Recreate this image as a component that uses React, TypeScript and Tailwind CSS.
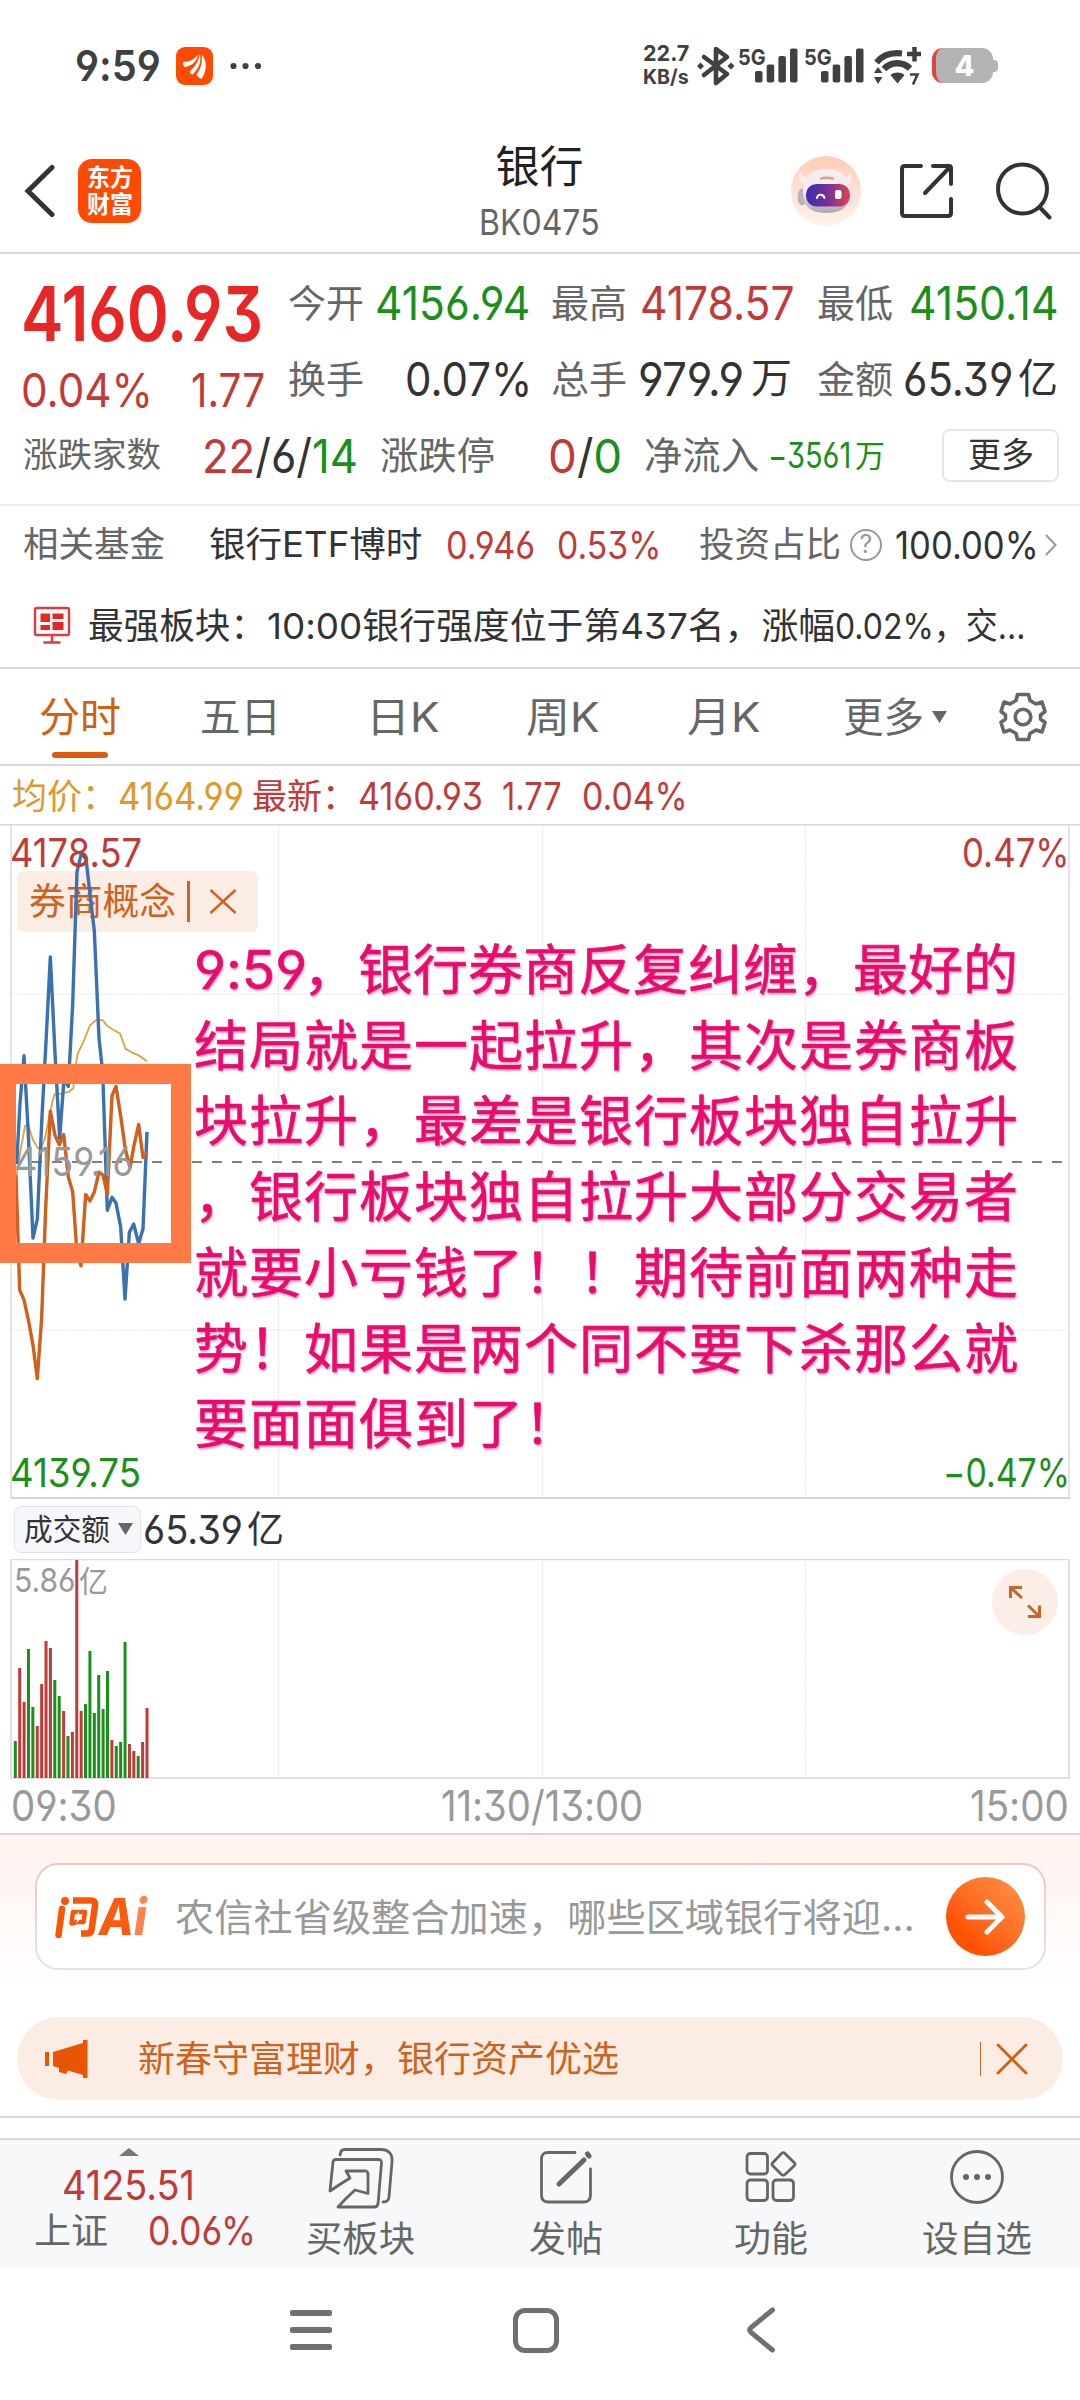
import { useLayoutEffect, useRef, useState, type ReactNode } from "react";
import clsx from "clsx";

const RED = "#c23a38";
const GREEN = "#1a8f1a";

// Stretches a single line of text to the width of its box
const Fit = ({ className, children }: { className?: string; children: ReactNode }) => {
  const box = useRef<HTMLSpanElement>(null);
  const text = useRef<HTMLSpanElement>(null);
  const [scale, setScale] = useState(1);

  useLayoutEffect(() => {
    if (box.current && text.current) {
      setScale(box.current.clientWidth / text.current.offsetWidth);
    }
  }, [children]);

  return (
    <span ref={box} className={clsx("block shrink-0 leading-none", className)}>
      <span
        ref={text}
        className="inline-block origin-left whitespace-nowrap align-top"
        style={{ transform: `scaleX(${scale})` }}
      >
        {children}
      </span>
    </span>
  );
};

const Signal = () => (
  <div className="flex">
    <Fit className="w-[28px] pt-[2px] text-[22px] font-bold">5G</Fit>
    <svg className="-ml-[11px] h-[40px] w-[43px]" viewBox="0 0 43 40" fill="#404040">
      <rect x="0" y="27" width="7.5" height="11.5" rx="2" />
      <rect x="11.7" y="20.5" width="7.5" height="18" rx="2" />
      <rect x="23.4" y="12" width="7.5" height="26.5" rx="2" />
      <rect x="35" y="4.5" width="7.5" height="34" rx="2" />
    </svg>
  </div>
);

const StatusBar = () => (
  <div className="flex h-[131px] items-center text-[#404040]">
    <Fit className="ml-[75px] w-[86px] text-[43px] font-semibold">9:59</Fit>
    <svg className="ml-[15px] h-[38px] w-[37px]" viewBox="0 0 37 38">
      <rect width="37" height="38" rx="9" fill="#ff4a03" />
      <g fill="#fff">
        <path d="M7 15C14 15 19 12 22 7.500C21 14.500 16 19 8.500 20C7.200 19 6.800 17 7 15Z" />
        <path d="M13.500 24.500C20 19.500 23 13 23.500 6.800C26 13.500 23 22 16.500 27.500C15 27 14 26 13.500 24.500Z" />
        <path d="M20.500 27.500C25.500 21 26.500 14.500 25.500 7.500C31.500 13.500 31 24 25.500 32C23.500 31 21.500 29.500 20.500 27.500Z" />
      </g>
    </svg>
    <svg className="ml-[17px] h-[8px] w-[32px]" viewBox="0 0 32 8" fill="#404040">
      <circle cx="3.500" cy="4" r="3.100" />
      <circle cx="15.500" cy="4" r="3.100" />
      <circle cx="28" cy="4" r="3.100" />
    </svg>

    <div className="ml-[381px] flex flex-col gap-[3px] pb-[2px] font-bold">
      <Fit className="w-[46px] text-[22px]">22.7</Fit>
      <Fit className="w-[46px] text-[20px]">KB/s</Fit>
    </div>
    <svg className="ml-[8px] h-[42px] w-[38px]" viewBox="0 0 38 42" fill="none" stroke="#404040" strokeWidth="4.600" strokeLinejoin="round">
      <path d="M7 12L30 29L19 38V4L30 12L7 30" strokeLinecap="round" />
      <g fill="#404040" stroke="none">
        <path d="M3.500 17.500L7 21L3.500 24.500L0 21Z M34 17.500L37.500 21L34 24.500L30.500 21Z" />
      </g>
    </svg>
    <div className="ml-[3px] flex gap-[6px] pb-[3px]">
      <Signal />
      <Signal />
    </div>
    <svg className="ml-[10px] h-[40px] w-[48px]" viewBox="0 0 48 40" fill="none" stroke="#404040">
      <path d="M2.500 16.500C9 8.500 17 6 28 7.500" strokeWidth="6" />
      <path d="M10 23C17 15.500 29 15.500 36 22.500" strokeWidth="6.500" />
      <path d="M33 8H47M40.500 1V15.500" strokeWidth="4.500" />
      <path d="M16.500 29C21 25.800 26 25.800 30.500 29L23.500 37.500Z M0 27L4 21L8.500 27Z M0 31H8.500L4 38Z" fill="#404040" stroke="none" />
      <path d="M36 28.500H43.500L39 38.500" strokeWidth="2.600" />
    </svg>
    <div className="ml-[10px] flex items-center">
      <div className="flex h-[35px] w-[61px] items-center justify-center overflow-hidden rounded-[11px] border-l-[4px] border-[#e0453c] bg-[#b3b3b3] text-[29px] leading-none font-extrabold text-white">
        4
      </div>
      <div className="h-[12px] w-[5px] rounded-r-[4px] bg-[#b3b3b3]" />
    </div>
  </div>
);

const Robot = () => (
  <svg className="h-[70px] w-[70px]" viewBox="0 0 70 70">
    <defs>
      <linearGradient id="halo" x1="0" y1="0" x2="0" y2="1">
        <stop offset="0" stopColor="#ffcdb8" />
        <stop offset="1" stopColor="#fff3ec" />
      </linearGradient>
      <linearGradient id="visor" x1="0" y1="0" x2="1" y2="0">
        <stop offset="0" stopColor="#3a2fb0" />
        <stop offset="0.450" stopColor="#6f2f9c" />
        <stop offset="1" stopColor="#e0405a" />
      </linearGradient>
      <linearGradient id="shell" x1="0" y1="0" x2="0" y2="1">
        <stop offset="0" stopColor="#f6eeee" />
        <stop offset="0.500" stopColor="#f3edf0" />
        <stop offset="1" stopColor="#aaa6b0" />
      </linearGradient>
    </defs>
    <circle cx="35" cy="35" r="35" fill="url(#halo)" />
    <ellipse cx="11" cy="41" rx="4.500" ry="8.500" fill="#b9b2b8" />
    <ellipse cx="60" cy="41" rx="4.500" ry="8.500" fill="#efe2e0" />
    <path d="M9 16C6 24 10 28 16 29L22 20C15 22 11 21 9 16Z M59 16C63 24 59 28 54 29L48 20C54 22 58 21 59 16Z" fill="#f7efef" />
    <path d="M12 40C11 22 20 13 35 13C51 13 59 22 59 40C58 52 49 57 35 57C22 57 13 52 12 40Z" fill="url(#shell)" />
    <path d="M29 21.500C33 20 39 20 43 21.500V24C39 23 33 23 29 24Z" fill="#d8a98c" />
    <rect x="15" y="28" width="44" height="22.500" rx="10.500" fill="url(#visor)" />
    <path d="M26 42C26.500 37.500 32.500 37.500 33.500 42" fill="none" stroke="#fff" strokeWidth="2" strokeLinecap="round" />
    <rect x="44" y="34" width="6.500" height="9" rx="2" fill="#fff" />
  </svg>
);

const Header = () => (
  <div className="flex h-[123px] items-center border-b-2 border-[#d8d8d8] pb-px">
    <svg className="ml-[24px] h-[54px] w-[32px]" viewBox="0 0 32 54" fill="none" stroke="#333" strokeWidth="5" strokeLinecap="round">
      <path d="M28 3.500L4 27L28 50.500" />
    </svg>
    <div className="ml-[22px] flex h-[64px] w-[63px] flex-col items-center justify-center gap-[3px] rounded-[14px] bg-[#ff4a03] font-bold text-white">
      <Fit className="w-[46px] text-[24px]">东方</Fit>
      <Fit className="w-[46px] text-[24px]">财富</Fit>
    </div>
    <div className="ml-[338px] flex w-[121px] flex-col items-center gap-[15px] pt-[6px] pb-[3px]">
      <Fit className="w-[88px] text-[44px] text-[#222]">银行</Fit>
      <Fit className="w-[121px] text-[36px] text-[#666]">BK0475</Fit>
    </div>
    <div className="ml-[191px]">
      <Robot />
    </div>
    <svg className="ml-[38px] h-[56px] w-[56px]" viewBox="0 0 56 56" fill="none" stroke="#333" strokeWidth="4" strokeLinecap="round" strokeLinejoin="round">
      <path d="M22 3H6Q3 3 3 6V50Q3 53 6 53H49Q52 53 52 50V36M34 3H50Q52 3 52 5V21M51 4L26 30" />
    </svg>
    <svg className="ml-[40px] h-[58px] w-[58px]" viewBox="0 0 58 58" fill="none" stroke="#333" strokeWidth="4" strokeLinecap="round">
      <circle cx="27.500" cy="27" r="24.500" />
      <path d="M44.500 45L54.500 55.500" />
    </svg>
  </div>
);

const Quote = () => (
  <div className="flex h-[252px] flex-col border-b-2 border-[#eee] pt-[11px]">
    <div className="flex">
      <div className="ml-[21px] flex w-[267px] flex-col">
        <Fit className="mt-[11px] w-[242px] text-[75px] font-semibold text-[#e82626]">4160.93</Fit>
        <div className="mt-[15px] flex text-[47px] text-[#c23a38]">
          <Fit className="w-[132px]">0.04%</Fit>
          <Fit className="ml-[38px] w-[74px]">1.77</Fit>
        </div>
      </div>
      <div className="flex flex-col text-[38px] text-[#666]">
        <div className="flex h-[75px] items-center">
          <Fit className="w-[76px]">今开</Fit>
          <Fit className="ml-[11px] w-[155px] text-[47px] text-[#1a8f1a]">4156.94</Fit>
          <Fit className="ml-[21px] w-[76px]">最高</Fit>
          <Fit className="ml-[13px] w-[155px] text-[47px] text-[#c23a38]">4178.57</Fit>
          <Fit className="ml-[22px] w-[76px]">最低</Fit>
          <Fit className="ml-[16px] w-[150px] text-[47px] text-[#1a8f1a]">4150.14</Fit>
        </div>
        <div className="flex h-[77px] items-center">
          <Fit className="w-[76px]">换手</Fit>
          <Fit className="ml-[41px] w-[127px] text-[47px] text-[#333]">0.07%</Fit>
          <Fit className="ml-[19px] w-[76px]">总手</Fit>
          <Fit className="ml-[11px] w-[106px] text-[47px] text-[#333]">979.9</Fit>
          <Fit className="ml-[7px] w-[41px] text-[41px] text-[#333]">万</Fit>
          <Fit className="ml-[25px] w-[76px]">金额</Fit>
          <Fit className="ml-[10px] w-[110px] text-[47px] text-[#333]">65.39</Fit>
          <Fit className="ml-[5px] w-[40px] text-[41px] text-[#333]">亿</Fit>
        </div>
      </div>
    </div>
    <div className="flex h-[76px] items-center text-[38px] text-[#666]">
      <Fit className="ml-[23px] w-[138px] text-[34px]">涨跌家数</Fit>
      <Fit className="ml-[41px] w-[156px] text-[47px] text-[#333]">
        <span className="text-[#c23a38]">22</span>/6/<span className="text-[#1a8f1a]">14</span>
      </Fit>
      <Fit className="ml-[22px] w-[115px]">涨跌停</Fit>
      <Fit className="ml-[53px] w-[74px] text-[47px] text-[#333]">
        <span className="text-[#c23a38]">0</span>/<span className="text-[#1a8f1a]">0</span>
      </Fit>
      <Fit className="ml-[22px] w-[115px]">净流入</Fit>
      <Fit className="ml-[9px] w-[83px] text-[35px] text-[#1a8f1a]">−3561</Fit>
      <Fit className="ml-[4px] w-[30px] text-[31px] text-[#1a8f1a]">万</Fit>
      <div className="ml-[57px] flex h-[53px] w-[117px] items-center justify-center rounded-[8px] border-2 border-[#e6e6e6] text-[#333]">
        <Fit className="w-[66px] text-[34px]">更多</Fit>
      </div>
    </div>
  </div>
);

const Related = () => (
  <div className="h-[163px] border-b-2 border-[#d8d8d8] text-[35px]">
    <div className="flex h-[77px] items-center text-[#666]">
      <Fit className="ml-[23px] w-[142px]">相关基金</Fit>
      <Fit className="ml-[44px] w-[213px] text-[#333]">银行ETF博时</Fit>
      <Fit className="ml-[24px] w-[89px] text-[38px] text-[#c23a38]">0.946</Fit>
      <Fit className="ml-[22px] w-[104px] text-[38px] text-[#c23a38]">0.53%</Fit>
      <Fit className="ml-[38px] w-[142px]">投资占比</Fit>
      <span className="ml-[9px] flex h-[32px] w-[32px] items-center justify-center rounded-full border-2 border-[#999] text-[25px] leading-none text-[#999]">
        ?
      </span>
      <Fit className="ml-[13px] w-[144px] text-[38px] text-[#333]">100.00%</Fit>
      <svg className="ml-[6px] h-[22px] w-[12px]" viewBox="0 0 12 22" fill="none" stroke="#999" strokeWidth="2">
        <path d="M1 1L10.500 11L1 21" />
      </svg>
    </div>
    <div className="flex h-[84px] items-center pt-px">
      <svg className="ml-[33px] h-[39px] w-[38px]" viewBox="0 0 38 39" fill="none" stroke="#e23b3b" strokeWidth="2.400">
        <rect x="2" y="2" width="34" height="27" rx="1.500" />
        <path d="M19 29V36M10.500 36.500H27.500" />
        <path d="M7.500 7.500H17V16H7.500Z M19.500 7.500H30.500V13H19.500Z M7.500 19H17V24H7.500Z M19.500 16H30.500V24H19.500Z" fill="#e82626" stroke="none" />
      </svg>
      <Fit className="ml-[17px] w-[178px] text-[36px] text-[#333]">最强板块：</Fit>
      <Fit className="ml-px w-[568px] text-[36px] text-[#333]">10:00银行强度位于第437名，涨幅</Fit>
      <Fit className="w-[190px] text-[36px] text-[#333]">0.02%，交...</Fit>
    </div>
  </div>
);

const Tabs = () => (
  <div className="flex h-[97px] items-center border-b-2 border-[#d8d8d8] text-[41px] text-[#666]">
    <div className="ml-[39px] flex flex-col items-center pt-[22px] text-[#d2600f]">
      <Fit className="w-[82px]">分时</Fit>
      <div className="mt-[14px] h-[6px] w-[56px] rounded-full bg-[#e05a0e]" />
    </div>
    <Fit className="ml-[79px] w-[81px] pt-px">五日</Fit>
    <Fit className="ml-[85px] w-[74px] pt-px">日K</Fit>
    <Fit className="ml-[86px] w-[74px] pt-px">周K</Fit>
    <Fit className="ml-[87px] w-[74px] pt-px">月K</Fit>
    <Fit className="ml-[82px] w-[81px] pt-px">更多</Fit>
    <svg className="ml-[8px] h-[12px] w-[15px]" viewBox="0 0 15 12" fill="#666">
      <path d="M0 0H15L7.500 12Z" />
    </svg>
    <svg className="ml-[52px] h-[50px] w-[48px]" viewBox="0 0 48 50" fill="none" stroke="#666" strokeWidth="3.600" strokeLinejoin="round">
      <path d="M18.500 2.500H29.500L31 8.500L37 12L43 10L46 19.500L41.500 23V27L46 30.500L43 40L37 38L31 41.500L29.500 47.500H18.500L17 41.500L11 38L5 40L2 30.500L6.500 27V23L2 19.500L5 10L11 12L17 8.500Z" />
      <circle cx="24" cy="25" r="7.800" />
    </svg>
  </div>
);

const Averages = () => (
  <div className="flex h-[58px] items-center pt-[2px] text-[35px] text-[#c23a38]">
    <Fit className="ml-[12px] w-[105px] text-[#e0982b]">均价：</Fit>
    <Fit className="ml-px w-[126px] text-[38px] text-[#e0982b]">4164.99</Fit>
    <Fit className="ml-[8px] w-[105px]">最新：</Fit>
    <Fit className="ml-px w-[125px] text-[38px]">4160.93</Fit>
    <Fit className="ml-[19px] w-[60px] text-[38px]">1.77</Fit>
    <Fit className="ml-[20px] w-[106px] text-[38px]">0.04%</Fit>
  </div>
);

const sector =
  "50,930 60,765 72,637 85,850 99,1130 112,1078 126,800 138,600 151,370 165,630 179,860 192,700 205,720 218,500 231,140 244,90 258,105 270,200 283,300 297,590 308,680 322,1055 336,1020 348,1035 362,1100 375,1295 388,1115 401,1092 416,1145 429,1105 441,843";
const broker =
  "48,960 59,1270 72,1297 86,1355 99,1420 112,1510 125,1345 137,1050 151,787 165,852 178,878 191,850 205,965 218,1005 231,1170 243,1205 257,1012 270,1030 283,1005 297,952 309,960 322,1012 336,745 348,720 362,800 376,890 390,940 402,880 416,823 429,912 441,898";
const average =
  "50,960 62,890 75,828 84,822 98,863 112,885 122,890 135,860 150,790 163,742 180,740 205,735 220,725 226,670 233,632 250,600 270,555 288,541 308,541 322,557 340,567 360,577 366,592 376,618 395,628 418,637 441,652";

const noteLines = [
  "结局就是一起拉升，其次是券商板",
  "块拉升，最差是银行板块独自拉升",
  "，银行板块独自拉升大部分交易者",
  "就要小亏钱了！！期待前面两种走",
  "势！如果是两个同不要下杀那么就",
  "要面面俱到了！",
];

const PriceChart = () => (
  <div className="relative h-[675px]">
    {/* compared sector, under the curves */}
    <div className="absolute top-[47px] left-[17px] flex h-[61px] w-[241px] items-center rounded-[7px] bg-[#fcede4]">
      <Fit className="ml-[12px] w-[147px] text-[37px] text-[#cf6220]">券商概念</Fit>
      <div className="ml-[11px] h-[41px] w-[3px] bg-[#c8652b]" />
      <svg className="ml-[19px] h-[27px] w-[28px]" viewBox="0 0 28 27" fill="none" stroke="#cf6220" strokeWidth="2.400">
        <path d="M1.500 2L26.500 25M26.500 2L1.500 25" />
      </svg>
    </div>

    <svg className="relative h-[675px] w-full" viewBox="0 824 1080 675" fill="none">
      <path d="M0 824.500H1080" stroke="#d8d8d8" strokeWidth="2" />
      <path d="M11 825V1498M1069 825V1498" stroke="#e4e4e4" strokeWidth="2" />
      <path d="M11 1498H1070" stroke="#d4d4d4" strokeWidth="2" />
      <path d="M12 994H1068M12 1330H1068M278.500 825V1498M542.500 825V1498M805.500 825V1498" stroke="#dedede" strokeDasharray="1.500 1.500" />
      <path d="M12 1162H1068" stroke="#808080" strokeWidth="1.800" strokeDasharray="10 10" />
      <g transform="translate(0 820) scale(0.33333 0.36996)" strokeLinejoin="round">
        <polyline points={average} stroke="#e0a040" strokeWidth="1.800" vectorEffect="non-scaling-stroke" />
        <polyline points={sector} stroke="#3a72b0" strokeWidth="3.400" vectorEffect="non-scaling-stroke" />
        <polyline points={broker} stroke="#d0601c" strokeWidth="3.400" vectorEffect="non-scaling-stroke" />
      </g>
    </svg>

    {/* scale labels in the corners */}
    <Fit className="absolute top-[9px] left-[10px] w-[132px] text-[40px] text-[#c23a38]">4178.57</Fit>
    <Fit className="absolute top-[9px] right-[10px] w-[108px] text-[40px] text-[#c23a38]">0.47%</Fit>
    <Fit className="absolute top-[318px] left-[14px] w-[120px] text-[40px] text-[#999]">4159.16</Fit>
    <Fit className="absolute bottom-[6px] left-[10px] w-[131px] text-[40px] text-[#1a8f1a]">4139.75</Fit>
    <Fit className="absolute right-[10px] bottom-[6px] w-[127px] text-[40px] text-[#1a8f1a]">−0.47%</Fit>

    <div className="absolute top-[240px] left-0 h-[199px] w-[191px] border-x-[20px] border-y-[20px] border-l-[16px] border-[#ff7a45]" />

    {/* note */}
    <div className="absolute top-[109px] left-[194px] text-[54px] leading-[75.7px] text-[#e80c6c] [-webkit-text-stroke:0.6px_#e80c6c] [text-shadow:1px_2px_2px_#e80c6c66]">
      <div className="flex items-center">
        <Fit className="w-[113px] text-[53px]">9:59</Fit>
        <Fit className="-ml-[4px] h-[75.700px] w-[715px] leading-[75.7px]!">，银行券商反复纠缠，最好的</Fit>
      </div>
      {noteLines.map((line) => (
        <p key={line} className="tracking-[1px] whitespace-nowrap">
          {line}
        </p>
      ))}
    </div>
  </div>
);

// [height in px, rising]
const volumes: [number, boolean][] = [
  [37, false], [110, true], [76, true], [129, false], [71, false], [52, true], [94, true], [137, true],
  [130, true], [98, false], [82, false], [67, true], [42, false], [46, true], [218, true], [67, true],
  [74, false], [127, false], [65, false], [103, false], [69, false], [107, false], [38, true], [32, false],
  [36, false], [136, false], [34, true], [27, true], [22, false], [36, true], [70, true],
];

const Volume = () => (
  <div className="border-b-2 border-[#d8d8d8]">
    <div className="flex h-[60px] items-center">
      <div className="ml-[14px] flex h-[47px] w-[127px] items-center rounded-[7px] border border-[#e2e3e6] bg-[#f6f7fa]">
        <Fit className="ml-[9px] w-[86px] text-[30px] text-[#333]">成交额</Fit>
        <svg className="ml-[8px] h-[12px] w-[15px]" viewBox="0 0 15 12" fill="#666">
          <path d="M0 0H15L7.500 12Z" />
        </svg>
      </div>
      <Fit className="ml-[2px] w-[100px] pt-px text-[40px] text-[#333]">65.39</Fit>
      <Fit className="ml-[4px] w-[37px] text-[37px] text-[#333]">亿</Fit>
    </div>
    <div className="relative h-[220px]">
      <div className="absolute top-[5px] left-[14px] flex items-center text-[#999]">
        <Fit className="w-[62px] text-[33px]">5.86</Fit>
        <Fit className="ml-[3px] w-[29px] text-[30px]">亿</Fit>
      </div>
      <svg className="relative h-[220px] w-full" viewBox="0 0 1080 220" fill="none">
        <path d="M11 0.500H1069" stroke="#dcdcdc" strokeWidth="1.500" />
        <path d="M11 0V219H1069V0" stroke="#e0e0e0" strokeWidth="2" />
        <path d="M278.500 0V219M542.500 0V219M805.500 0V219" stroke="#dedede" strokeDasharray="1.500 1.500" />
        {volumes.map(([h, up], i) => (
          <rect key={i} x={13.8 + i * 4.39} y={219 - h} width="3" height={h} fill={up ? RED : GREEN} />
        ))}
      </svg>
      <div className="absolute top-[10px] right-[22px] flex h-[66px] w-[66px] items-center justify-center rounded-full bg-[#fceee6]">
        <svg className="h-[34px] w-[34px]" viewBox="0 0 34 34" fill="none" stroke="#c8652b" strokeWidth="3">
          <path d="M2.500 13V2.500H14M3 3L14 13M31.500 20.500V31.500H20M31 31L20 20.500" />
        </svg>
      </div>
    </div>
    <div className="flex h-[54px] items-center text-[42px] text-[#999]">
      <Fit className="ml-[11px] w-[106px]">09:30</Fit>
      <Fit className="ml-[324px] w-[202px]">11:30/13:00</Fit>
      <Fit className="ml-[327px] w-[99px]">15:00</Fit>
    </div>
  </div>
);

const AskAi = () => (
  <div className="flex h-[182px] justify-center bg-linear-to-b from-[#fff2ee] to-white to-85% pt-[28px]">
    <div className="h-[107px] w-[1011px] rounded-[23px] bg-linear-to-b from-[#ecc8c0] to-[#dfe5ec] p-[2px]">
      <div className="flex h-full items-center rounded-[21px] bg-white">
        <svg className="ml-[18px] h-[42px] w-[44px]" viewBox="0 0 44 42" fill="none">
          <g stroke="#fb5608" strokeWidth="6.500">
            <path d="M7 13L3.500 39" strokeLinecap="round" />
            <path d="M18 4.500H36Q41 4.500 40 10L36.500 34Q36 37.500 32 37.500H26" />
            <path d="M18 16H30L28.500 26H22L16.500 27.500Z" strokeWidth="4.500" strokeLinejoin="round" />
          </g>
          <circle cx="10" cy="5" r="4" fill="#fb5608" />
          <path d="M24 15L19.500 22H23L21 28L27 20.500H23.500Z" fill="#fff" />
        </svg>
        <Fit className="w-[48px] text-[51px] font-extrabold text-[#fb5a10] italic">
          A<span className="text-[#ff8350]">i</span>
        </Fit>
        <Fit className="ml-[28px] w-[740px] text-[38px] text-[#999]">农信社省级整合加速，哪些区域银行将迎...</Fit>
        <div className="ml-[31px] flex h-[79px] w-[79px] items-center justify-center rounded-full bg-linear-to-bl from-[#ff9445] to-[#ff5200] to-75%">
          <svg className="h-[36px] w-[40px]" viewBox="0 0 40 36" fill="none" stroke="#fff" strokeWidth="5" strokeLinecap="round" strokeLinejoin="round">
            <path d="M3 18H37M22 3L37 18L22 33" />
          </svg>
        </div>
      </div>
    </div>
  </div>
);

const Promo = () => (
  <div className="h-[101px] border-b-2 border-[#d8d8d8]">
    <div className="mx-[17px] flex h-[83px] items-center rounded-full bg-[#fcede4]">
      <svg className="ml-[28px] h-[38px] w-[43px]" viewBox="0 0 43 38" fill="#ea5504">
        <path d="M0 12H4V26H0Z M8 12L38 3V0H42.500V38H38V35L23 30.500L21 34L14 32V28L8 26Z" />
      </svg>
      <Fit className="ml-[50px] w-[481px] text-[36px] text-[#cf6220]">新春守富理财，银行资产优选</Fit>
      <div className="ml-[361px] h-[34px] w-px bg-[#c8652b]" />
      <svg className="ml-[15px] h-[32px] w-[32px]" viewBox="0 0 32 32" fill="none" stroke="#d2600f" strokeWidth="2.800" strokeLinecap="round">
        <path d="M2 2L30 30M30 2L2 30" />
      </svg>
    </div>
  </div>
);

const BottomBar = () => (
  <div className="mt-[20px] flex h-[129px] border-t-2 border-[#d8d8d8] bg-[#f7f8fa] text-[#666]">
    <div className="ml-[34px] flex w-[220px] flex-col pt-[8px] text-[#c23a38]">
      <svg className="ml-[85px] h-[8px] w-[20px]" viewBox="0 0 20 8" fill="#777">
        <path d="M0 8H20L10 0Z" />
      </svg>
      <Fit className="mt-[9px] ml-[28px] w-[133px] text-[41px]">4125.51</Fit>
      <div className="mt-[5px] flex items-center">
        <Fit className="w-[74px] text-[36px] text-[#666]">上证</Fit>
        <Fit className="ml-[40px] w-[108px] text-[39px]">0.06%</Fit>
      </div>
    </div>

    <div className="ml-[52px] flex w-[109px] flex-col items-center pt-[7px] text-[36px]">
      <svg className="h-[62px] w-[66px]" viewBox="0 0 66 62" fill="none" stroke="#666" strokeWidth="2.800" strokeLinejoin="round" strokeLinecap="round">
        <path d="M12 8L13 4.500Q14 2.500 17 2.500H53Q65 3 64 15L61 50Q60.500 55 55 55" />
        <path d="M2 44L5 15Q5.500 12.500 8 12.500H50Q54 12.500 53.500 16L50 57Q49.500 60 46 60H10L17.500 52L27 43L40 46.500V27Q40 23.500 36 24H18L22 31L11 38Z" />
      </svg>
      <Fit className="mt-[12px] w-[109px]">买板块</Fit>
    </div>

    <div className="ml-[114px] flex w-[74px] flex-col items-center pt-[9px] text-[36px]">
      <svg className="h-[56px] w-[54px]" viewBox="0 0 54 56" fill="none" stroke="#666" strokeWidth="2.800" strokeLinecap="round">
        <path d="M36 3.500H9Q2.500 3.500 2.500 10V46Q2.500 53 9 53H45Q51.500 53 51.500 46V20" />
        <path d="M48.500 5L50 7M45 11L20 35" strokeWidth="5" />
      </svg>
      <Fit className="mt-[16px] w-[74px]">发帖</Fit>
    </div>

    <div className="ml-[131px] flex w-[74px] flex-col items-center pt-[11px] text-[36px]">
      <svg className="h-[52px] w-[52px]" viewBox="0 0 52 52" fill="none" stroke="#666" strokeWidth="2.800" strokeLinejoin="round">
        <rect x="2" y="2.500" width="20.500" height="20.500" rx="3.500" />
        <rect x="2" y="29" width="20.500" height="20.500" rx="3.500" />
        <rect x="28" y="29" width="20.500" height="20.500" rx="3.500" />
        <path d="M36.500 2.500Q38.300 1 40 2.500L49.500 12Q50.500 13 49.500 14.500L40 23.500Q38.300 25 36.500 23.500L27.500 14.500Q26.500 13 27.500 12Z" />
      </svg>
      <Fit className="mt-[18px] w-[74px]">功能</Fit>
    </div>

    <div className="ml-[114px] flex w-[110px] flex-col items-center pt-[9px] text-[36px]">
      <svg className="h-[56px] w-[56px]" viewBox="0 0 56 56" fill="none" stroke="#666" strokeWidth="2.800">
        <circle cx="28" cy="28" r="25.500" />
        <g fill="#666" stroke="none">
          <circle cx="17" cy="28" r="3" />
          <circle cx="28" cy="28" r="3" />
          <circle cx="39" cy="28" r="3" />
        </g>
      </svg>
      <Fit className="mt-[16px] w-[110px]">设自选</Fit>
    </div>
  </div>
);

const SystemNav = () => (
  <div className="flex h-[133px] items-center pb-[7px]">
    <svg className="ml-[290px] h-[40px] w-[42px]" viewBox="0 0 42 40" fill="#707070">
      <rect width="42" height="6" rx="2" />
      <rect y="17" width="42" height="6" rx="2" />
      <rect y="34" width="42" height="6" rx="2" />
    </svg>
    <div className="ml-[181px] h-[45px] w-[46px] rounded-[12px] border-[5px] border-[#707070]" />
    <svg className="ml-[187px] h-[46px] w-[30px]" viewBox="0 0 30 46" fill="none" stroke="#707070" strokeWidth="5" strokeLinecap="round">
      <path d="M26.500 3L5 20.500Q2.500 23 5 25.500L26.500 43" />
    </svg>
  </div>
);

const App = () => (
  <div className="h-[2400px] w-[1080px] overflow-hidden bg-white font-['Inter','Noto_Sans_CJK_SC',sans-serif] [font-feature-settings:'cv03','cv04','cv09','calt'_0]">
    <StatusBar />
    <Header />
    <Quote />
    <Related />
    <Tabs />
    <Averages />
    <PriceChart />
    <Volume />
    <AskAi />
    <Promo />
    <BottomBar />
    <SystemNav />
  </div>
);

export default App;
